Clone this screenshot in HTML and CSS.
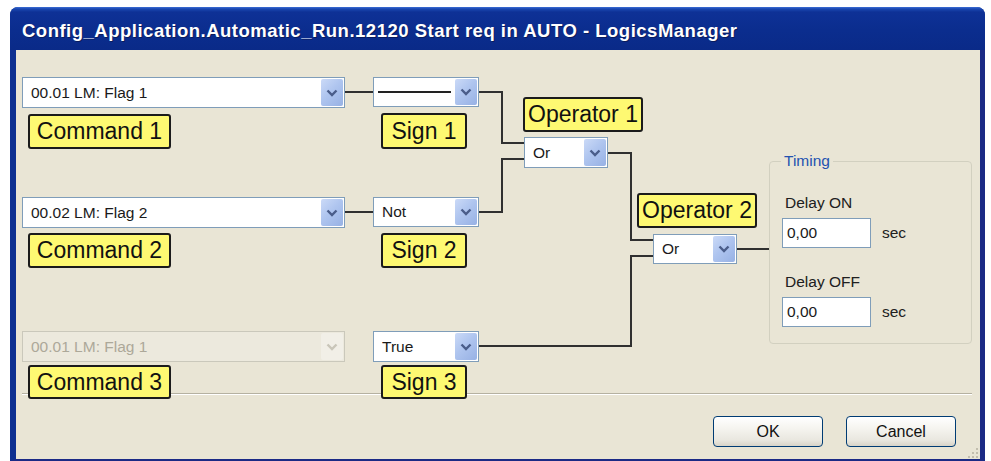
FILE: index.html
```html
<!DOCTYPE html>
<html>
<head>
<meta charset="utf-8">
<title>LogicsManager</title>
<link rel="stylesheet" href="styles.css">
</head>
<body>
<div class="window">
  <div class="titlebar"><span class="title">Config_Application.Automatic_Run.12120 Start req in AUTO - LogicsManager</span></div>
  <div class="client">
    <div class="main">
      <div class="diagram">
        <svg class="wires" width="753" height="343" viewBox="0 0 753 343">
          <polyline points="329,42 357,42"/>
          <polyline points="329,162 357,162"/>
          <polyline points="463,42 486,42 486,93 508,93"/>
          <polyline points="463,162 486,162 486,109 508,109"/>
          <polyline points="592,103 615,103 615,190 637,190"/>
          <polyline points="463,296 615,296 615,206 637,206"/>
          <polyline points="721,199 753,199"/>
        </svg>

        <div class="combo cmd n-c1"><span class="val">00.01 LM: Flag 1</span><span class="btn"><svg width="12" height="8" viewBox="0 0 12 8"><polyline points="1.5,1.5 6,6 10.5,1.5"/></svg></span></div>
        <div class="tag tag-cmd t-c1">Command 1</div>

        <div class="combo sign n-s1"><span class="val"><span class="dash"></span></span><span class="btn"><svg width="12" height="8" viewBox="0 0 12 8"><polyline points="1.5,1.5 6,6 10.5,1.5"/></svg></span></div>
        <div class="tag tag-sign t-s1">Sign 1</div>

        <div class="tag tag-op t-o1">Operator 1</div>
        <div class="combo op n-o1"><span class="val">Or</span><span class="btn"><svg width="12" height="8" viewBox="0 0 12 8"><polyline points="1.5,1.5 6,6 10.5,1.5"/></svg></span></div>

        <div class="combo cmd n-c2"><span class="val">00.02 LM: Flag 2</span><span class="btn"><svg width="12" height="8" viewBox="0 0 12 8"><polyline points="1.5,1.5 6,6 10.5,1.5"/></svg></span></div>
        <div class="tag tag-cmd t-c2">Command 2</div>

        <div class="combo sign n-s2"><span class="val">Not</span><span class="btn"><svg width="12" height="8" viewBox="0 0 12 8"><polyline points="1.5,1.5 6,6 10.5,1.5"/></svg></span></div>
        <div class="tag tag-sign t-s2">Sign 2</div>

        <div class="tag tag-op t-o2">Operator 2</div>
        <div class="combo op n-o2"><span class="val">Or</span><span class="btn"><svg width="12" height="8" viewBox="0 0 12 8"><polyline points="1.5,1.5 6,6 10.5,1.5"/></svg></span></div>

        <div class="combo cmd disabled n-c3"><span class="val">00.01 LM: Flag 1</span><span class="btn"><svg width="12" height="8" viewBox="0 0 12 8"><polyline points="1.5,1.5 6,6 10.5,1.5"/></svg></span></div>
        <div class="tag tag-cmd t-c3">Command 3</div>

        <div class="combo sign n-s3"><span class="val">True</span><span class="btn"><svg width="12" height="8" viewBox="0 0 12 8"><polyline points="1.5,1.5 6,6 10.5,1.5"/></svg></span></div>
        <div class="tag tag-sign t-s3">Sign 3</div>
      </div>

      <div class="group">
        <span class="legend">Timing</span>
        <div class="field-label">Delay ON</div>
        <div class="field-row"><span class="input">0,00</span><span class="unit">sec</span></div>
        <div class="field-label second">Delay OFF</div>
        <div class="field-row"><span class="input">0,00</span><span class="unit">sec</span></div>
      </div>
    </div>
    <div class="sep"></div>
    <div class="footer">
      <button class="xpbtn">OK</button>
      <button class="xpbtn">Cancel</button>
    </div>
    <svg class="grip" width="14" height="14" viewBox="0 0 14 14">
      <rect x="11" y="3" width="2" height="2"/>
      <rect x="7" y="7" width="2" height="2"/><rect x="11" y="7" width="2" height="2"/>
      <rect x="3" y="11" width="2" height="2"/><rect x="7" y="11" width="2" height="2"/><rect x="11" y="11" width="2" height="2"/>
    </svg>
  </div>
</div>
</body>
</html>
```

FILE: styles.css
```css
html, body {
  margin: 0;
  padding: 0;
  background: #ffffff;
}

.window {
  margin: 7px 0 0 10px;
  width: 975px;
  height: 454px;
  display: flex;
  flex-direction: column;
  border-radius: 8px 8px 0 0;
  overflow: hidden;
  background: #0b2c8c;
}

.titlebar {
  flex: none;
  height: 43px;
  box-sizing: border-box;
  padding: 4px 0 0 12px;
  display: flex;
  align-items: center;
  background: linear-gradient(#3d6ed6 0, #1a47b0 2px, #0e3196 5px, #0b2d8e 55%, #0a2a88 100%);
}

.title {
  font-family: "Liberation Sans", Arial, sans-serif;
  font-weight: bold;
  font-size: 18.5px;
  letter-spacing: 0.5px;
  color: #ffffff;
  white-space: nowrap;
  text-shadow: 1px 1px 0 #0a1c5c;
}

.client {
  flex: 1;
  position: relative;
  background: #e9e5d5;
  border-left: 6px solid #0d2f91;
  border-right: 5px solid #1b2a85;
  border-bottom: 2px solid #1b2a85;
  display: flex;
  flex-direction: column;
  font-family: "Liberation Sans", Arial, sans-serif;
}

.main {
  display: flex;
  height: 343px;
  flex: none;
  position: relative;
  z-index: 1;
}

.diagram {
  position: relative;
  width: 753px;
  height: 343px;
  flex: none;
}

.wires {
  position: absolute;
  left: 0;
  top: 0;
}

.wires polyline {
  fill: none;
  stroke: #303030;
  stroke-width: 2;
}

/* combo boxes */
.combo {
  position: absolute;
  box-sizing: border-box;
  height: 31px;
  border: 1px solid #7f9db9;
  background: #ffffff;
  display: flex;
  align-items: stretch;
  padding: 1px;
}

.combo .val {
  flex: 1;
  display: flex;
  align-items: center;
  padding-left: 7px;
  font-size: 15.5px;
  color: #1a1a1a;
  white-space: nowrap;
  overflow: hidden;
}

.combo .btn {
  flex: none;
  width: 22px;
  border-radius: 2px;
  background: linear-gradient(135deg, #cbdaf7 0%, #afc5ef 45%, #97b1e4 100%);
  display: flex;
  align-items: center;
  justify-content: center;
}

.combo .btn svg polyline {
  fill: none;
  stroke: #4a5d8a;
  stroke-width: 2.4;
}

.combo.disabled {
  border-color: #cac8bb;
  background: #ece9dd;
}

.combo.disabled .val {
  color: #aca899;
}

.combo.disabled .btn {
  background: #f1efe7;
}

.combo.disabled .btn svg polyline {
  stroke: #c9c6b9;
}

.dash {
  display: block;
  width: 73px;
  height: 2px;
  margin-left: -4px;
  background: #222222;
}

.cmd { width: 323px; left: 6px; }
.sign { width: 106px; left: 357px; }
.op { width: 84px; }

.n-c1 { top: 27px; }
.n-s1 { top: 27px; height: 30px; }
.n-o1 { left: 508px; top: 87px; }
.n-c2 { top: 147px; }
.n-s2 { top: 147px; height: 30px; }
.n-o2 { left: 637px; top: 184px; height: 30px; }
.n-c3 { top: 281px; }
.n-s3 { top: 281px; }

/* yellow callout labels */
.tag {
  position: absolute;
  box-sizing: border-box;
  height: 35px;
  border: 2px solid #1b1b1b;
  border-radius: 3px;
  background: #fef972;
  font-size: 23px;
  color: #111111;
  display: flex;
  align-items: center;
  justify-content: center;
  white-space: nowrap;
}

.tag-cmd { left: 12px; width: 143px; }
.tag-sign { left: 365px; width: 86px; }
.tag-op { width: 120px; }

.t-c1 { top: 64px; }
.t-s1 { top: 63px; height: 36px; }
.t-o1 { left: 507px; top: 47px; }
.t-c2 { top: 183px; }
.t-s2 { top: 183px; }
.t-o2 { left: 621px; top: 143px; }
.t-c3 { top: 315px; height: 34px; }
.t-s3 { top: 315px; height: 34px; }

/* timing group */
.group {
  position: relative;
  flex: none;
  box-sizing: border-box;
  width: 203px;
  height: 183px;
  margin-top: 111px;
  border: 1px solid #d2d0c0;
  border-radius: 4px;
  padding: 32px 0 0 12px;
}

.legend {
  position: absolute;
  left: 11px;
  top: -10px;
  padding: 0 3px;
  background: #e9e5d5;
  font-size: 15.5px;
  line-height: 18px;
  color: #2352b0;
}

.field-label {
  font-size: 15.5px;
  line-height: 18px;
  color: #202020;
  padding-left: 3px;
  margin-bottom: 6px;
}

.field-label.second {
  margin-top: 25px;
}

.field-row {
  display: flex;
  align-items: center;
}

.input {
  box-sizing: border-box;
  width: 89px;
  height: 30px;
  border: 1px solid #7f9db9;
  background: #ffffff;
  padding-left: 4px;
  display: flex;
  align-items: center;
  font-size: 15.5px;
  color: #1a1a1a;
}

.unit {
  margin-left: 11px;
  font-size: 15.5px;
  color: #202020;
}

.sep {
  flex: none;
  margin: 0 8px 0 6px;
  border-top: 1px solid #b5b1a1;
  border-bottom: 1px solid #ffffff;
}

.footer {
  flex: none;
  display: flex;
  justify-content: flex-end;
  gap: 23px;
  padding: 21px 24px 0 0;
}

.xpbtn {
  box-sizing: border-box;
  width: 110px;
  height: 31px;
  border: 1px solid #003c74;
  border-radius: 4px;
  background: linear-gradient(#ffffff 0%, #f5f4ef 40%, #e9e7df 80%, #d8d4c8 100%);
  font-family: "Liberation Sans", Arial, sans-serif;
  font-size: 16px;
  color: #111111;
  padding: 0;
}

.grip {
  position: absolute;
  right: 1px;
  bottom: 0;
  fill: #c2beae;
}
```
